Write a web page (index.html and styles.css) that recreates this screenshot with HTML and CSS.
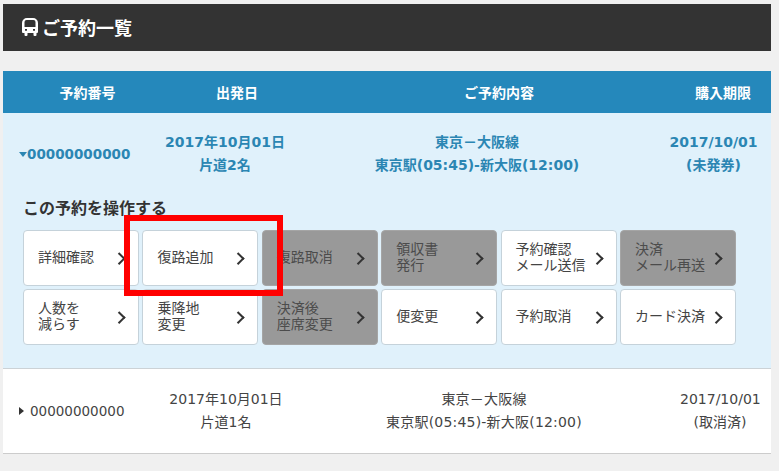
FILE: index.html
```html
<!DOCTYPE html>
<html lang="ja">
<head>
<meta charset="utf-8">
<title>ご予約一覧</title>
<link rel="stylesheet" href="styles.css">
</head>
<body>
<main class="page">
  <h1 class="title">
    <svg class="bus" viewBox="0 0 16 18" width="16" height="18"><path fill="#fff" fill-rule="evenodd" d="M5 0h6a5 5 0 0 1 5 5v9a1 1 0 0 1-1 1h-.5v2a1 1 0 0 1-1 1h-1a1 1 0 0 1-1-1v-2H5.500v2a1 1 0 0 1-1 1h-1a1 1 0 0 1-1-1v-2H1a1 1 0 0 1-1-1V5a5 5 0 0 1 5-5zM4.500 2a2 2 0 0 0-2 2v5h11V4a2 2 0 0 0-2-2zM3 11v1.800h2V11zM11 11v1.800h2V11z"/></svg>
    ご予約一覧
  </h1>
  <section class="list">
    <div class="head">
      <span>予約番号</span><span>出発日</span><span>ご予約内容</span><span>購入期限</span>
    </div>
    <div class="open">
      <div class="row row-open">
        <div class="num"><i class="tri-down"></i>00000000000</div>
        <div>2017年10月01日<br>片道2名</div>
        <div>東京－大阪線<br>東京駅(05:45)-新大阪(12:00)</div>
        <div class="expiry">2017/10/01<br>(未発券)</div>
      </div>
      <h2 class="ops-title">この予約を操作する</h2>
      <div class="ops">
        <a class="btn">詳細確認</a>
        <a class="btn">復路追加</a>
        <a class="btn off">復路取消</a>
        <a class="btn off">領収書<br>発行</a>
        <a class="btn">予約確認<br>メール送信</a>
        <a class="btn off">決済<br>メール再送</a>
        <a class="btn">人数を<br>減らす</a>
        <a class="btn">乗降地<br>変更</a>
        <a class="btn off">決済後<br>座席変更</a>
        <a class="btn">便変更</a>
        <a class="btn">予約取消</a>
        <a class="btn">カード決済</a>
      </div>
    </div>
    <div class="row row-closed">
      <div class="num"><i class="tri-right"></i>00000000000</div>
      <div>2017年10月01日<br>片道1名</div>
      <div class="route">東京－大阪線<br>東京駅(05:45)-新大阪(12:00)</div>
      <div class="expiry">2017/10/01<br>(取消済)</div>
    </div>
  </section>
  <div class="highlight"></div>
</main>
</body>
</html>
```
FILE: styles.css
```css
* { box-sizing: border-box; }
html, body { margin: 0; height: 100%; }
body {
  background: #f0f0f0;
  color: #444;
  font-family: "DejaVu Sans", "Noto Sans CJK JP", sans-serif;
  font-size: 14px;
  overflow: hidden;
}
.page {
  position: relative;
  width: 768px;
  margin-left: 3px;
  padding-top: 4px;
}
.title {
  display: flex;
  align-items: center;
  gap: 4px;
  height: 47px;
  margin: 0 0 20px;
  padding-left: 19px;
  padding-bottom: 1px;
  background: #333;
  color: #fff;
  font-size: 18px;
  font-weight: 700;
}
.head {
  display: grid;
  grid-template-columns: 169px 130px 394px 54px;
  align-items: center;
  height: 42px;
  background: #2588bb;
  color: #fff;
  font-size: 14px;
  font-weight: 700;
  text-align: center;
  white-space: nowrap;
}
.head span { display: flex; justify-content: center; }
.open {
  height: 256px;
  background: #e0f1fb;
  border-bottom: 1px solid #ccd2d6;
}
.row {
  display: grid;
  align-items: center;
  text-align: center;
  line-height: 23px;
  white-space: nowrap;
}
.row-open {
  grid-template-columns: 137px 170px 334px 115px;
  padding-top: 18px;
  color: #2b86b3;
  font-weight: 700;
}
.row-open .expiry { padding-left: 24px; }
.row-closed {
  grid-template-columns: 137px 172px 344px 104px;
  height: 85px;
  background: #fff;
  border-bottom: 1px solid #ccc;
}
.row-closed .expiry { padding-left: 24px; }
.route { letter-spacing: 0.2px; }
.num {
  display: flex;
  align-items: center;
  padding-left: 16px;
  font-size: 13.5px;
  text-align: left;
}
.tri-down {
  width: 0;
  height: 0;
  border-style: solid;
  border-width: 5px 4px 0;
  border-color: #2b86b3 transparent transparent;
}
.tri-right {
  width: 0;
  height: 0;
  margin-right: 6px;
  border-style: solid;
  border-width: 4.5px 0 4.5px 5px;
  border-color: transparent transparent transparent #333;
}
.ops-title {
  margin: 22px 0 0 20px;
  color: #333;
  font-size: 16px;
  line-height: 20px;
  font-weight: 700;
}
.ops {
  display: grid;
  grid-template-columns: repeat(6, 116px);
  grid-auto-rows: 56px;
  column-gap: 3.4px;
  row-gap: 3px;
  margin: 11px 0 0 20px;
}
.btn {
  position: relative;
  display: flex;
  align-items: center;
  padding: 0 24px 2px 14px;
  background: #fff;
  border: 1px solid #c5d2da;
  border-radius: 4px;
  color: #444;
  font-size: 14px;
  line-height: 16px;
  white-space: nowrap;
}
.btn::after {
  content: "";
  position: absolute;
  top: 50%;
  right: 14.5px;
  width: 6.5px;
  height: 6.5px;
  margin-top: -4.5px;
  border-top: 2.5px solid #333;
  border-right: 2.5px solid #333;
  transform: rotate(45deg);
}
.off {
  background: #999;
  border-color: #a5a5a5;
  color: #4c4c4c;
}
.highlight {
  position: absolute;
  left: 121px;
  top: 215px;
  width: 159px;
  height: 81px;
  border: 6px solid #f00;
}
```
